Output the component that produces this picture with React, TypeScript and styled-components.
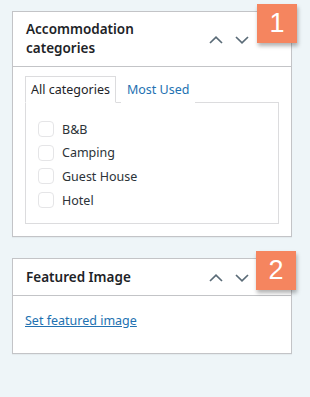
import React, { useState } from 'react'
import styled, { createGlobalStyle } from 'styled-components'

const GlobalStyle = createGlobalStyle`
  html, body {
    margin: 0;
    padding: 0;
    background: #eef5f8;
  }
  body {
    font-family: 'Noto Sans', 'Open Sans', sans-serif;
  }
`

const Page = styled.div`
  width: 310px;
  height: 397px;
  padding: 11px 0 0 12px;
  box-sizing: border-box;
  display: flex;
  flex-direction: column;
  gap: 21px;
`

const Panel = styled.div`
  position: relative;
  width: 280px;
  box-sizing: border-box;
  background: #fff;
  border: 1px solid #c3c4c7;
  box-shadow: 0 1px 1px rgba(0, 0, 0, 0.04);
`

const PanelHeader = styled.div<{ $h: number }>`
  height: ${p => p.$h}px;
  box-sizing: border-box;
  display: flex;
  align-items: center;
  justify-content: space-between;
  padding: 0 42px 0 13px;
  border-bottom: 1px solid #c3c4c7;
`

const PanelTitle = styled.div`
  font-size: 13.5px;
  font-weight: 600;
  line-height: 19px;
  color: #1d2327;
  width: 150px;
`

const Arrows = styled.div`
  display: flex;
  gap: 12px;
  align-items: center;
  padding-top: 2px;
`

const Badge = styled.div<{ $right: number }>`
  position: absolute;
  top: -8px;
  right: ${p => p.$right}px;
  width: 40px;
  height: 39px;
  background: #f5855f;
  color: #fff;
  font-family: 'Liberation Sans', Arial, sans-serif;
  font-size: 27px;
  display: flex;
  align-items: center;
  justify-content: center;
  box-shadow: 1px 3px 4px rgba(0, 0, 0, 0.3);
`

const PanelBody = styled.div<{ $pad: string }>`
  padding: ${p => p.$pad};
`

const Tabs = styled.div`
  display: flex;
  align-items: flex-end;
`

const Tab = styled.div<{ $active?: boolean }>`
  height: 27px;
  box-sizing: border-box;
  padding: 0 5px;
  margin-right: 5px;
  display: flex;
  align-items: center;
  font-size: 12.5px;
  color: ${p => (p.$active ? '#1d2327' : '#2271b1')};
  border: 1px solid ${p => (p.$active ? '#dcdcde' : 'transparent')};
  border-bottom: 1px solid ${p => (p.$active ? '#fff' : 'transparent')};
  margin-bottom: -1px;
  background: #fff;
  position: relative;
  z-index: 1;
  cursor: pointer;
`

const TabPanel = styled.div`
  border: 1px solid #dcdcde;
  height: 122px;
  box-sizing: border-box;
  padding: 18px 12px 0 12px;
  display: flex;
  flex-direction: column;
  gap: 7.7px;
`

const CheckRow = styled.label`
  display: flex;
  align-items: center;
  gap: 8px;
  font-size: 12.5px;
  color: #2c3338;
  height: 16px;
`

const Box = styled.span`
  width: 16px;
  height: 16px;
  box-sizing: border-box;
  border: 1px solid #e5e5e7;
  border-radius: 4px;
  background: #fff;
`

const Link = styled.a`
  display: block;
  width: fit-content;
  font-size: 12.5px;
  line-height: 17px;
  color: #2271b1;
  text-decoration: underline;
  cursor: pointer;
`

const Chevron = ({ up }: { up?: boolean }) => (
  <svg width="14" height="8" viewBox="0 0 14 8">
    <polyline
      points={up ? '1,7 7,1.2 13,7' : '1,1 7,6.8 13,1'}
      fill="none"
      stroke="#5a6b77"
      strokeWidth="1.7"
    />
  </svg>
)

const categories = ['B&B', 'Camping', 'Guest House', 'Hotel']

const App = () => {
  const [tab, setTab] = useState('all')
  return (
    <>
      <GlobalStyle />
      <Page>
        <Panel>
          <PanelHeader $h={55}>
            <PanelTitle>Accommodation categories</PanelTitle>
            <Arrows>
              <Chevron up />
              <Chevron />
            </Arrows>
          </PanelHeader>
          <Badge $right={-6}>1</Badge>
          <PanelBody $pad="9px 12px 12px 12px">
            <Tabs>
              <Tab $active={tab === 'all'} onClick={() => setTab('all')}>All categories</Tab>
              <Tab $active={tab === 'pop'} onClick={() => setTab('pop')}>Most Used</Tab>
            </Tabs>
            <TabPanel>
              {categories.map(c => (
                <CheckRow key={c}>
                  <Box />
                  {c}
                </CheckRow>
              ))}
            </TabPanel>
          </PanelBody>
        </Panel>
        <Panel>
          <PanelHeader $h={37}>
            <PanelTitle>Featured Image</PanelTitle>
            <Arrows>
              <Chevron up />
              <Chevron />
            </Arrows>
          </PanelHeader>
          <Badge $right={-5}>2</Badge>
          <PanelBody $pad="16px 12px 24px 12px">
            <Link>Set featured image</Link>
          </PanelBody>
        </Panel>
      </Page>
    </>
  )
}

export default App
